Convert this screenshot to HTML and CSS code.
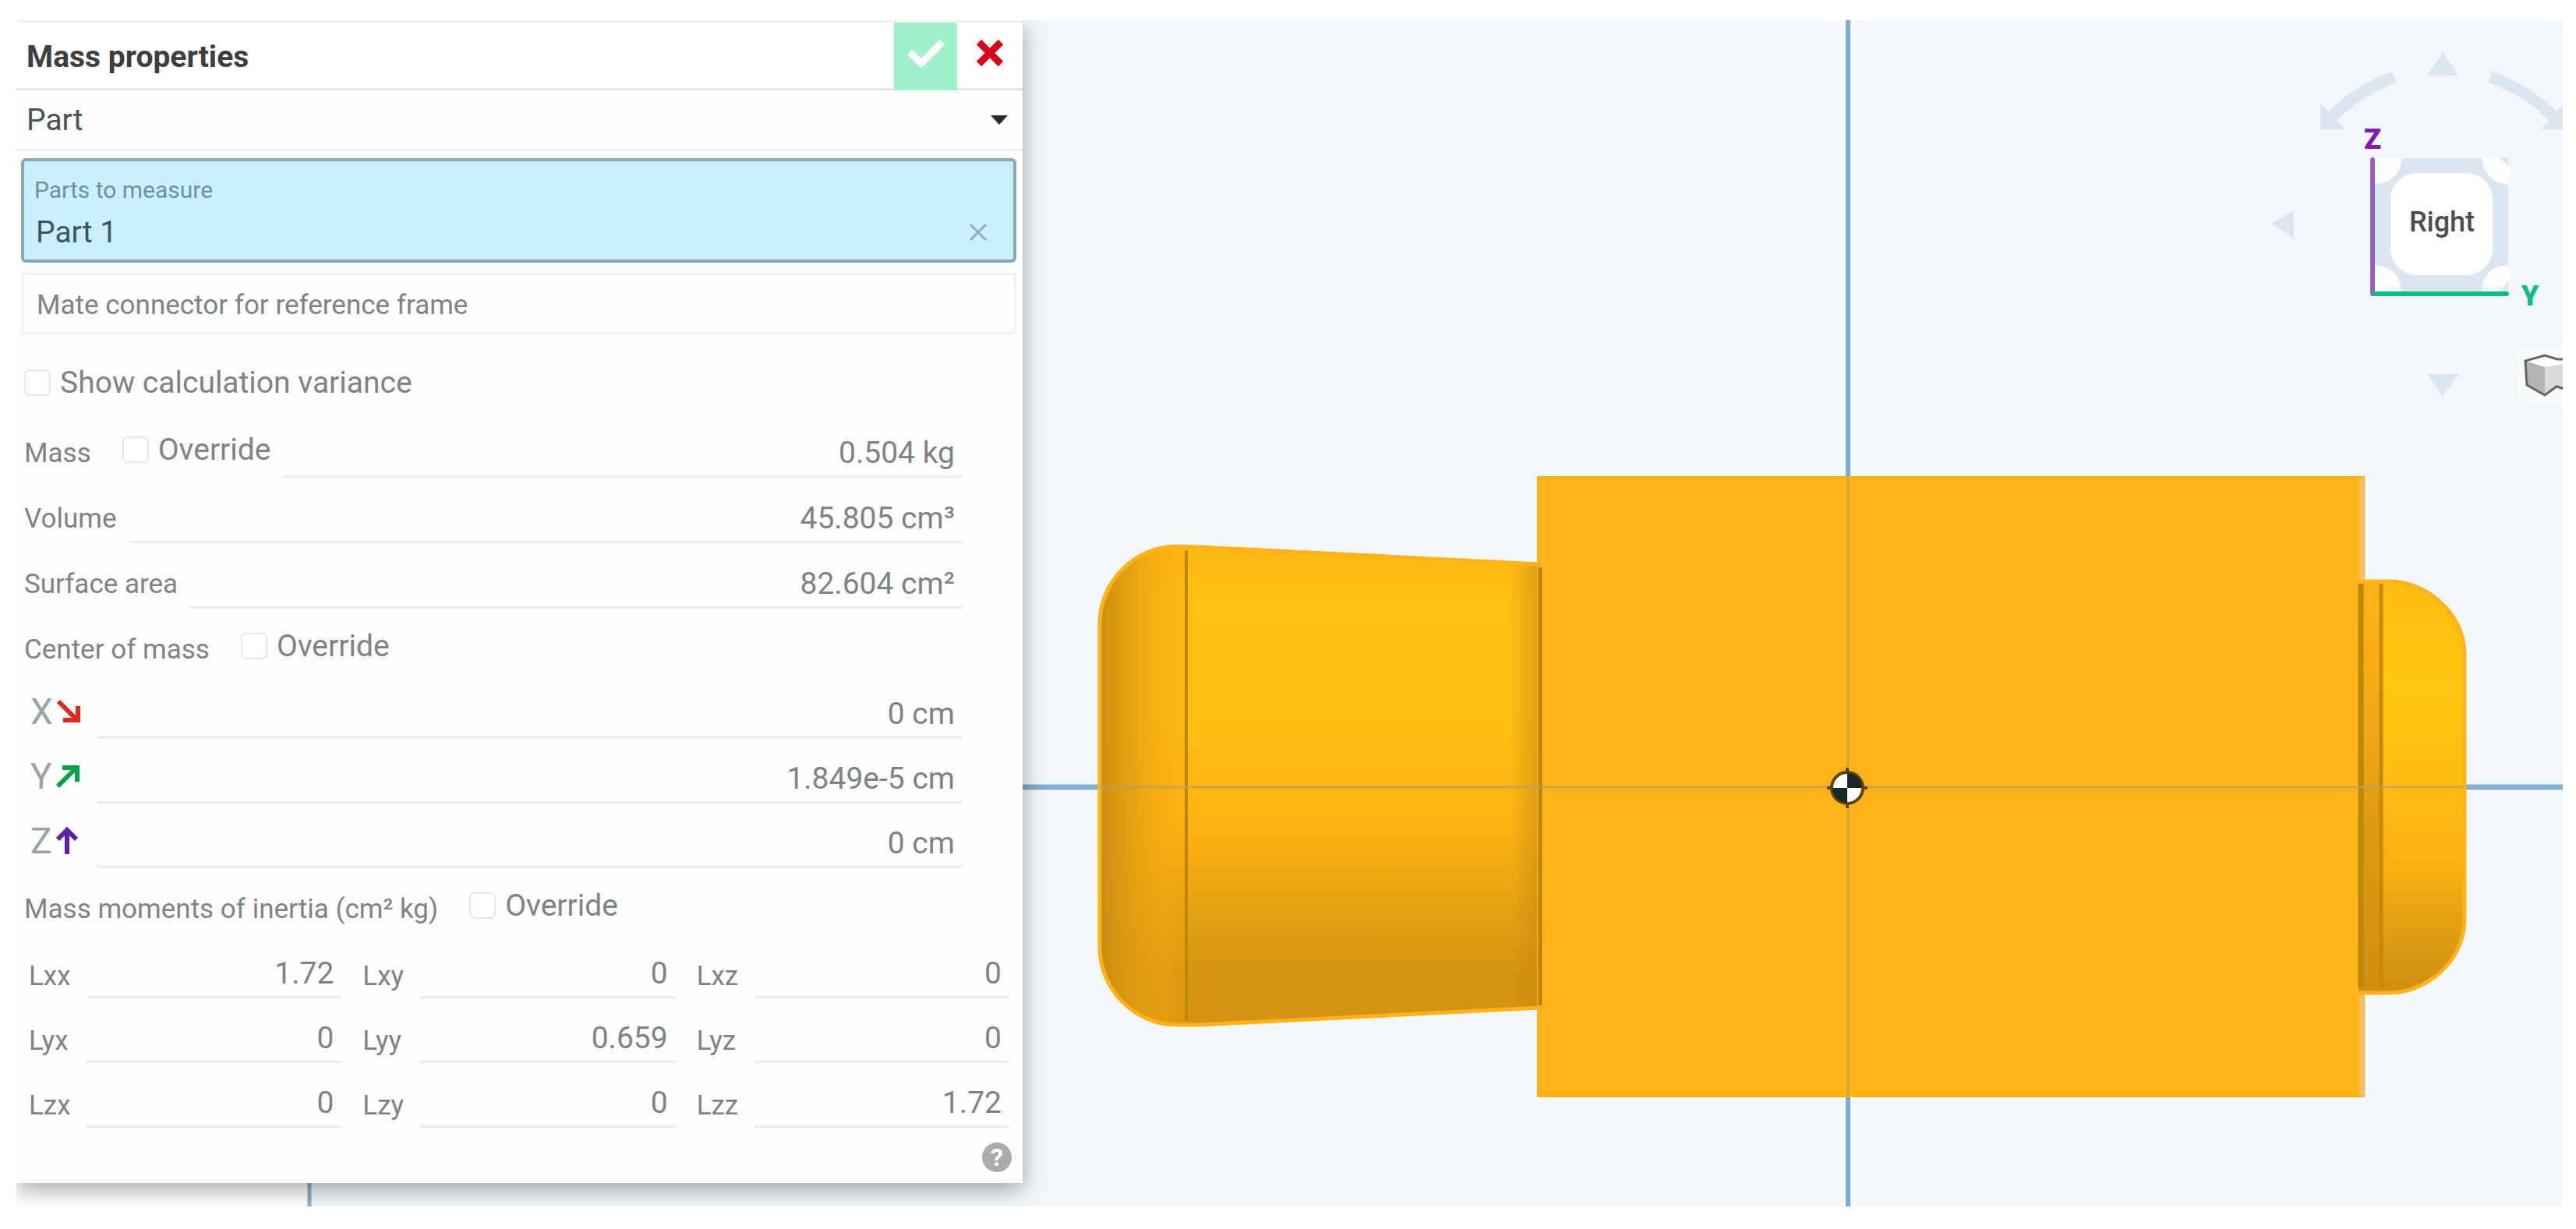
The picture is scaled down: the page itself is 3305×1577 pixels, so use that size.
FILE: index.html
```html
<!DOCTYPE html>
<html lang="en">
<head>
<meta charset="utf-8">
<title>Mass properties</title>
<link rel="stylesheet" href="styles.css">
</head>
<body>
<main class="workspace">
  <svg class="scene" viewBox="21 26 3267 1522" preserveAspectRatio="xMinYMin slice" role="img" aria-label="Part 1, right view">
    <defs>
      <linearGradient id="barrel" x1="0" y1="0" x2="0" y2="1">
        <stop offset="0" stop-color="#ffb810"/>
        <stop offset=".12" stop-color="#ffc013"/>
        <stop offset=".35" stop-color="#ffbf12"/>
        <stop offset=".58" stop-color="#ffb312"/>
        <stop offset=".75" stop-color="#e6a312"/>
        <stop offset=".9" stop-color="#d49410"/>
        <stop offset="1" stop-color="#d49212"/>
      </linearGradient>
      <linearGradient id="fillet" x1="0" y1="0" x2="1" y2="0">
        <stop offset="0" stop-color="#c98a10" stop-opacity=".95"/>
        <stop offset=".3" stop-color="#d99a10" stop-opacity=".8"/>
        <stop offset=".75" stop-color="#f5a810" stop-opacity=".5"/>
        <stop offset="1" stop-color="#f5a810" stop-opacity=".2"/>
      </linearGradient>
      <linearGradient id="contact" x1="0" y1="0" x2="1" y2="0">
        <stop offset="0" stop-color="#c48a10" stop-opacity="0"/>
        <stop offset="1" stop-color="#c48a10" stop-opacity=".6"/>
      </linearGradient>
      <linearGradient id="cap" x1="0" y1="0" x2="0" y2="1">
        <stop offset="0" stop-color="#ffbc12"/>
        <stop offset=".25" stop-color="#ffc60f"/>
        <stop offset=".5" stop-color="#ffbc12"/>
        <stop offset=".7" stop-color="#fbb012"/>
        <stop offset=".88" stop-color="#da9a12"/>
        <stop offset="1" stop-color="#d08e10"/>
      </linearGradient>
      <linearGradient id="neck" x1="0" y1="0" x2="0" y2="1">
        <stop offset="0" stop-color="#ffb315"/>
        <stop offset=".4" stop-color="#efa616"/>
        <stop offset=".6" stop-color="#dc9a14"/>
        <stop offset="1" stop-color="#cf8f10"/>
      </linearGradient>
    </defs>
    <rect x="395" y="26" width="2893" height="1522" fill="#f2f7fb"/>
    <path d="M397 26V1548" stroke="#8db0cc" stroke-width="5"/>
    <path d="M2371 26V1548" stroke="#7ea9d0" stroke-width="6"/>
    <path d="M395 1010H3288" stroke="#85aed2" stroke-width="7"/>

    <path d="M1976 724L1540 702L1510 701C1456 701 1411 746 1411 800V1216C1411 1270 1456 1315 1510 1315L1540 1315L1976 1293Z" fill="url(#barrel)"/>
    <path d="M1522 701H1510C1456 701 1411 746 1411 800V1216C1411 1270 1456 1315 1510 1315H1522Z" fill="url(#fillet)"/>
    <path d="M1936 723L1976 724V1293L1936 1295Z" fill="url(#contact)"/>
    <path d="M1976 724L1540 702L1510 701C1456 701 1411 746 1411 800V1216C1411 1270 1456 1315 1510 1315L1540 1315L1976 1293" fill="none" stroke="#ffb31a" stroke-width="5"/>
    <path d="M1522 706V1310" stroke="#bd8606" stroke-width="4"/>
    <rect x="1973" y="611" width="1061" height="797" fill="#ffb319"/>
    <path d="M1974 611V1408M1973 613H3034M1973 1406H3034" stroke="#ffb10d" stroke-width="4"/>
    <path d="M3030 613V1406" stroke="#f3bd6c" stroke-width="6"/>
    <path d="M1976 728V1290" stroke="#b98306" stroke-width="5"/>

    <path d="M3026 746H3066C3112 746 3162 786 3162 840V1180C3162 1234 3112 1274 3066 1274H3026Z" fill="url(#cap)"/>
    <path d="M3030 748H3054V1272H3030Z" fill="url(#neck)"/>
    <path d="M3026 746H3066C3112 746 3162 786 3162 840V1180C3162 1234 3112 1274 3066 1274H3026" fill="none" stroke="#ffb31a" stroke-width="5"/>
    <path d="M3029 749V1267" stroke="#b98605" stroke-width="7"/>
    <path d="M3055 749V1267" stroke="#c48a04" stroke-width="5"/>

    <path d="M1411 1010H3163M2371 613V1406" stroke="#b8a06a" stroke-opacity=".7" stroke-width="3"/>
    <g>
      <path d="M2370 985V1037M2344 1011H2396" stroke="#5d430c" stroke-width="4"/>
      <circle cx="2370" cy="1011" r="20" fill="#fff" stroke="#5d430c" stroke-width="4"/>
      <path d="M2370 1011V992A19 19 0 0 1 2389 1011ZM2370 1011V1030A19 19 0 0 1 2351 1011Z" fill="#1b262b"/>
    </g>
  </svg>

  <section class="dialog" aria-label="Mass properties">
    <header class="dialog-head">
      <h1>Mass properties</h1>
      <button class="accept" type="button" aria-label="Accept">
        <svg width="50" height="38" viewBox="0 0 50 38"><path d="M4 17L19 31L46 4" fill="none" stroke="#fff" stroke-width="9"/></svg>
      </button>
      <button class="cancel" type="button" aria-label="Cancel">
        <svg width="36" height="36" viewBox="0 0 36 36"><path d="M4 4L32 32M32 4L4 32" fill="none" stroke="#d8021f" stroke-width="9"/></svg>
      </button>
    </header>

    <div class="type-row">
      <select aria-label="Measured type"><option>Part</option></select>
      <svg class="caret" width="22" height="12" viewBox="0 0 22 12"><path d="M0 0H22L11 12Z" fill="#2b2b2b"/></svg>
    </div>

    <div class="parts">
      <label for="parts">Parts to measure</label>
      <div class="parts-line">
        <input id="parts" type="text" value="Part 1" readonly>
        <button type="button" aria-label="Remove Part 1">
          <svg width="24" height="24" viewBox="0 0 24 24"><path d="M2 2L22 22M22 2L2 22" fill="none" stroke="#8fadb8" stroke-width="3"/></svg>
        </button>
      </div>
    </div>

    <input class="mate" type="text" placeholder="Mate connector for reference frame" aria-label="Mate connector for reference frame">

    <label class="check variance"><input type="checkbox">Show calculation variance</label>

    <div class="row">
      <label class="name" for="mass">Mass</label>
      <label class="check"><input type="checkbox">Override</label>
      <input class="value" id="mass" type="text" value="0.504 kg">
    </div>
    <div class="row">
      <label class="name" for="volume">Volume</label>
      <input class="value" id="volume" type="text" value="45.805 cm³">
    </div>
    <div class="row">
      <label class="name" for="area">Surface area</label>
      <input class="value" id="area" type="text" value="82.604 cm²">
    </div>
    <div class="row">
      <span class="name">Center of mass</span>
      <label class="check"><input type="checkbox">Override</label>
    </div>

    <div class="row axis">
      <label for="cx">X<svg width="32" height="36" viewBox="0 0 32 36"><path d="M3 5L26 28M9 29H28V11" fill="none" stroke="#e02a20" stroke-width="6"/></svg></label>
      <input class="value" id="cx" type="text" value="0 cm">
    </div>
    <div class="row axis">
      <label for="cy">Y<svg width="32" height="36" viewBox="0 0 32 36"><path d="M3 31L26 8M9 7H28V25" fill="none" stroke="#0c9f4a" stroke-width="6"/></svg></label>
      <input class="value" id="cy" type="text" value="1.849e-5 cm">
    </div>
    <div class="row axis">
      <label for="cz">Z<svg width="32" height="36" viewBox="0 0 32 36"><path d="M15 35V4M3 16L15 4L27 16" fill="none" stroke="#5c21a8" stroke-width="6"/></svg></label>
      <input class="value" id="cz" type="text" value="0 cm">
    </div>

    <div class="row">
      <span class="name">Mass moments of inertia (cm² kg)</span>
      <label class="check"><input type="checkbox">Override</label>
    </div>

    <div class="inertia">
      <div class="cell"><label for="lxx">Lxx</label><input class="value" id="lxx" type="text" value="1.72"></div>
      <div class="cell"><label for="lxy">Lxy</label><input class="value" id="lxy" type="text" value="0"></div>
      <div class="cell"><label for="lxz">Lxz</label><input class="value" id="lxz" type="text" value="0"></div>
      <div class="cell"><label for="lyx">Lyx</label><input class="value" id="lyx" type="text" value="0"></div>
      <div class="cell"><label for="lyy">Lyy</label><input class="value" id="lyy" type="text" value="0.659"></div>
      <div class="cell"><label for="lyz">Lyz</label><input class="value" id="lyz" type="text" value="0"></div>
      <div class="cell"><label for="lzx">Lzx</label><input class="value" id="lzx" type="text" value="0"></div>
      <div class="cell"><label for="lzy">Lzy</label><input class="value" id="lzy" type="text" value="0"></div>
      <div class="cell"><label for="lzz">Lzz</label><input class="value" id="lzz" type="text" value="1.72"></div>
    </div>

    <footer class="dialog-foot">
      <button type="button" aria-label="Help">?</button>
    </footer>
  </section>

  <svg class="view-cube" width="388" height="500" viewBox="2900 26 388 500" role="img" aria-label="View cube">
    <g fill="#dbe7f0">
      <path d="M3134 67L3154 97H3114Z"/>
      <path d="M3134 508L3154 480H3114Z"/>
      <path d="M2914 287L2943 270V306Z"/>
      <path d="M2977 132V166H3009Z"/>
      <path d="M3290 132V166H3260Z"/>
    </g>
    <path d="M3072 99Q3023 116 2988 154M3195 99Q3245 116 3280 154" fill="none" stroke="#dbe7f0" stroke-width="15"/>
    <rect x="3045" y="203" width="173" height="173" fill="#dbe7f0"/>
    <g fill="#fcfdfe">
      <path d="M3045 203H3081Q3080 234 3045 237Z"/>
      <path d="M3184 203Q3188 234 3218 237L3222 222Q3216 204 3200 201Z"/>
      <path d="M3045 340Q3080 342 3081 376H3045Z"/>
      <path d="M3184 376Q3184 342 3218 340L3222 356L3206 376Z"/>
    </g>
    <rect x="3067" y="222" width="131" height="131" rx="34" fill="#fff"/>
    <path d="M3044 205V377" stroke="#9460bd" stroke-width="6" stroke-linecap="round"/>
    <path d="M3046 377H3216" stroke="#0cbd86" stroke-width="6" stroke-linecap="round"/>
    <text class="axis-z" x="3044" y="191" text-anchor="middle">Z</text>
    <text class="axis-y" x="3246" y="392" text-anchor="middle">Y</text>
    <text class="face" x="3133" y="297" text-anchor="middle">Right</text>
    <rect x="3230" y="446" width="80" height="70" rx="8" fill="#f8fbfc"/>
    <path d="M3240 463L3266 468V507L3242 494Z" fill="#b4b4b4"/>
    <path d="M3265 470L3290 464V500L3280 496L3265 507Z" fill="#d9d9d9"/>
    <path d="M3240 463L3265 456L3281 461H3290V467L3265 471Z" fill="#fff"/>
    <path d="M3290 461H3281L3265 456L3240 463L3242 494L3265 507L3280 496L3290 499" fill="none" stroke="#636666" stroke-width="3"/>
  </svg>
</main>
</body>
</html>
```
FILE: styles.css
```css
* {
  box-sizing: border-box;
}

body {
  margin: 0;
  min-height: 100vh;
  display: flex;
  padding: 26px 17px 29px 21px;
  background: #fff;
  color: #808383;
  font-family: Roboto, "Liberation Sans", sans-serif;
  font-size: 39px;
  line-height: 46px;
}

button,
input,
select {
  margin: 0;
  padding: 0;
  border: 0;
  border-radius: 0;
  background: none;
  color: inherit;
  font: inherit;
}

button {
  display: flex;
  align-items: center;
  justify-content: center;
}

/* The dialog takes the left part of the drawing area and lies over it. */
.workspace {
  position: relative;
  flex: 1;
  display: grid;
  grid-template-columns: minmax(0, 1291fr) minmax(0, 1976fr);
  align-items: start;
  overflow: hidden;
}

.scene {
  position: absolute;
  inset: 0;
  width: 100%;
  height: 100%;
}

.view-cube {
  position: absolute;
  top: 0;
  right: 0;
}

.face {
  font-size: 36px;
  font-weight: 500;
  fill: #4c4f50;
}

.axis-z,
.axis-y {
  font-size: 36px;
  font-weight: 900;
}

.axis-z {
  fill: #8019b0;
}

.axis-y {
  fill: #0cbd86;
}

.dialog {
  position: relative;
  display: flex;
  flex-direction: column;
  background: #fcfefe;
  box-shadow: 0 8px 28px rgba(0, 0, 0, .36);
}

.dialog-head {
  display: flex;
  height: 90px;
  border-top: 3px solid #f0f1f1;
  border-bottom: 3px solid #e2e4e4;
  background: #fff;
}

.dialog-head h1 {
  flex: 1;
  margin: 0;
  padding: 21px 0 0 13px;
  color: #3c3e3f;
  font-size: 39px;
  font-weight: 700;
  line-height: 46px;
}

.accept {
  width: 81px;
  margin-bottom: -3px;
  padding-bottom: 8px;
  background: #a0f0cb;
}

.cancel {
  width: 84px;
  padding-bottom: 6px;
}

.type-row {
  display: grid;
  align-items: center;
  height: 78px;
  border-bottom: 3px solid #f1f1ec;
  color: #4e5152;
}

.type-row select {
  grid-area: 1 / 1;
  height: 75px;
  padding-left: 13px;
  appearance: none;
}

.caret {
  grid-area: 1 / 1;
  justify-self: end;
  margin-right: 19px;
}

.parts {
  margin: 9px 8px 0 6px;
  height: 134px;
  padding: 19px 33px 0 13px;
  border: 4px solid #8fa7b5;
  border-radius: 6px;
  background: #caf0fd;
}

.parts label {
  display: block;
  color: #6f919a;
  font-size: 30px;
  line-height: 36px;
}

.parts-line {
  display: flex;
  align-items: center;
  padding-top: 13px;
}

.parts-line input {
  flex: 1;
  height: 46px;
  padding-left: 2px;
  color: #3b565e;
}

.mate {
  margin: 13px 8px 0 6px;
  height: 79px;
  padding: 4px 17px 0;
  border: 3px solid #f0f2f0;
  border-radius: 4px;
  font-size: 35px;
}

.mate::placeholder {
  color: #808383;
  opacity: 1;
}

.check {
  display: flex;
  align-items: center;
  gap: 12px;
}

.check input {
  width: 34px;
  height: 34px;
  border: 2px solid #e6e8e8;
  border-radius: 7px;
  background: #fff;
  appearance: none;
}

.variance {
  height: 76px;
  margin-top: 24px;
  padding-left: 10px;
}

.row {
  display: flex;
  align-items: flex-end;
  gap: 16px;
  height: 84px;
  padding: 0 77px 0 10px;
}

.row .check {
  margin-left: 24px;
  padding-bottom: 13px;
}

.name {
  padding-bottom: 11px;
  font-size: 35px;
  line-height: 41px;
}

.value {
  flex: 1;
  min-width: 0;
  height: 55px;
  padding: 0 10px 7px 0;
  border-bottom: 3px solid #eceeee;
  text-align: right;
}

.row.axis {
  height: 83px;
  gap: 0;
}

.axis label {
  display: flex;
  align-items: center;
  gap: 4px;
  width: 94px;
  padding: 0 0 8px 8px;
  color: #98a3a6;
  font-size: 46px;
  font-weight: 400;
  line-height: 54px;
}

.axis label svg {
  flex: none;
}

.inertia {
  display: grid;
  grid-template-columns: repeat(3, minmax(0, 1fr));
  grid-auto-rows: 83px;
  column-gap: 27px;
  padding: 0 17px 0 16px;
}

.cell {
  display: flex;
  align-items: flex-end;
}

.cell label {
  width: 74px;
  padding-bottom: 8px;
  font-size: 35px;
  line-height: 41px;
}

.dialog-foot {
  display: flex;
  justify-content: flex-end;
  padding: 19px 14px 14px;
}

.dialog-foot button {
  width: 38px;
  height: 38px;
  border-radius: 50%;
  background: #a9acac;
  color: #fff;
  font-size: 32px;
  font-weight: 700;
  line-height: 38px;
}
```
